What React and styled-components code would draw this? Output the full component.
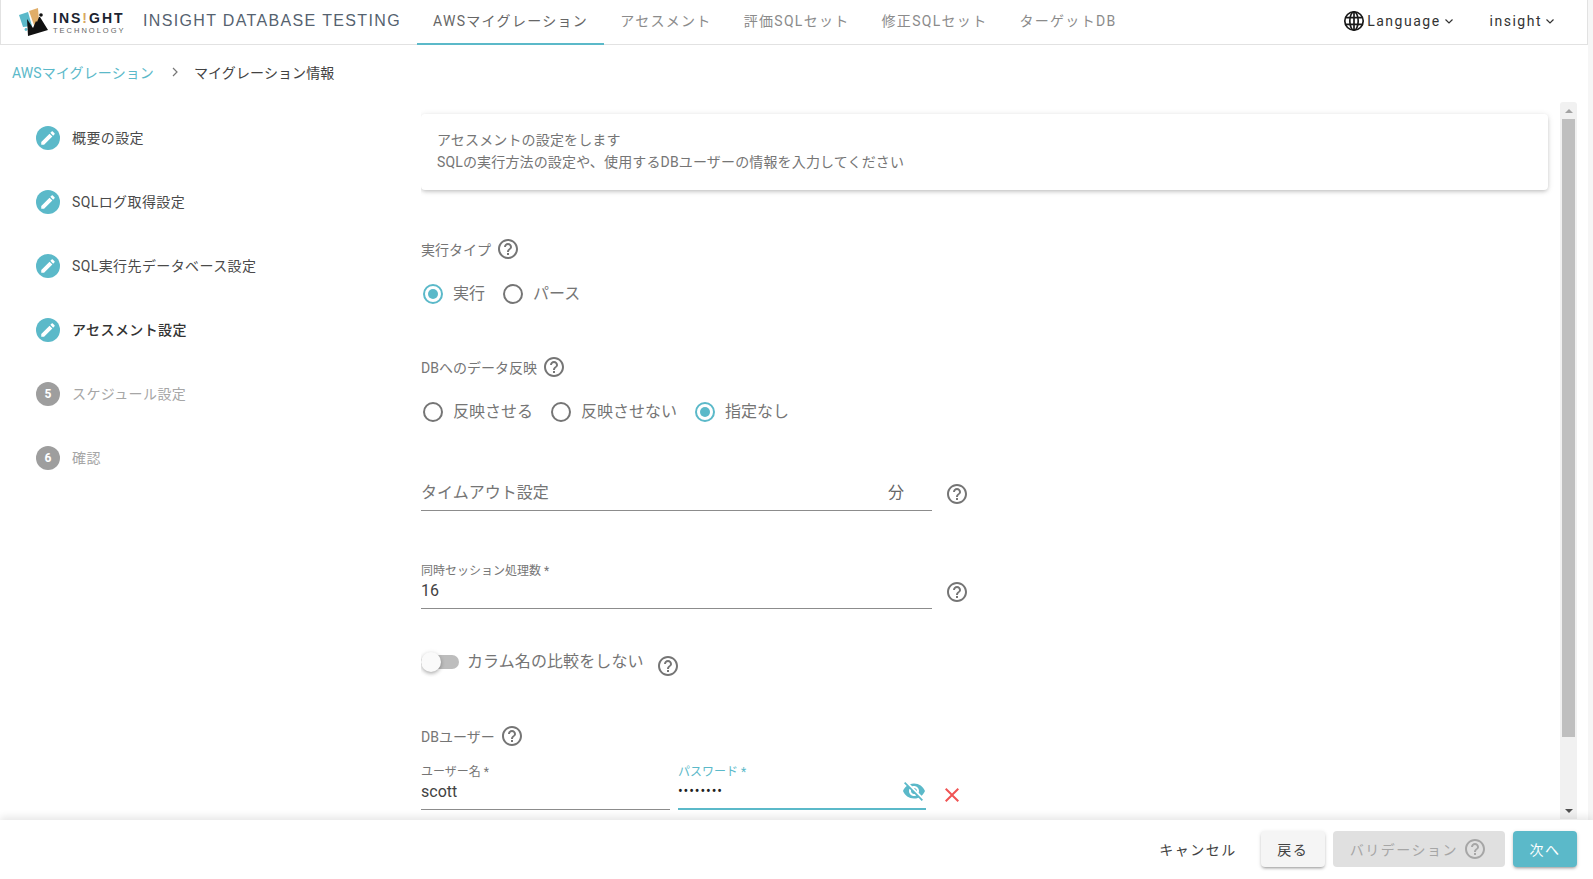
import React from 'react';
import styled, { createGlobalStyle } from 'styled-components';

const teal = '#5bb9c9';
const sans = `Roboto, "Noto Sans CJK JP", sans-serif`;

const GlobalStyle = createGlobalStyle`
  html, body {
    margin: 0;
    height: 100%;
    background: #fff;
    overflow: hidden;
  }
  #root {
    height: 100%;
  }
  * {
    box-sizing: border-box;
  }
`;

const Page = styled.div`
  height: 879px;
  display: flex;
  flex-direction: column;
  font-family: ${sans};
  color: #212121;
  padding-right: 5px;
  background: #f6f6f6;
`;

const NavBar = styled.header`
  height: 45px;
  flex: none;
  display: flex;
  align-items: stretch;
  background: #fff;
  border-bottom: 1px solid #e2e2e2;
  border-left: 1px solid #e2e2e2;
  border-right: 1px solid #e2e2e2;
`;

const LogoBox = styled.div`
  width: 125px;
  margin-left: 17px;
  display: flex;
  align-items: center;
  gap: 3px;
`;

const LogoWords = styled.div`
  display: flex;
  flex-direction: column;
  align-items: flex-start;
  gap: 2px;
  font-family: "Liberation Sans", sans-serif;
  line-height: 1;
  padding-top: 2px;
`;

const LogoName = styled.span`
  font-size: 14px;
  letter-spacing: 2px;
  font-weight: 700;
  color: #1c2430;
  b {
    color: #d9a860;
  }
`;

const LogoSub = styled.span`
  font-size: 7.5px;
  letter-spacing: 2px;
  color: #666;
`;

const Product = styled.div`
  width: 274px;
  align-self: center;
  margin-bottom: 2px;
  font-family: "Liberation Sans", sans-serif;
  font-size: 16px;
  letter-spacing: 1.35px;
  color: #55626f;
  white-space: nowrap;
`;

const Tabs = styled.nav`
  display: flex;
  align-items: stretch;
`;

const Tab = styled.a`
  display: flex;
  align-items: center;
  padding: 0 16px 3px;
  font-size: 14px;
  letter-spacing: 1.3px;
  color: ${(p) => (p.$active ? '#666' : '#8b8b8b')};
  border-bottom: 2px solid ${(p) => (p.$active ? teal : 'transparent')};
  margin-bottom: -1px;
`;

const NavRight = styled.div`
  margin-left: auto;
  display: flex;
  align-items: center;
  padding: 0 29px 3px 0;
`;

const NavMenu = styled.div`
  display: flex;
  align-items: center;
  font-size: 14px;
  letter-spacing: 1.5px;
  color: #333;
  margin-left: ${(p) => p.$gap || 0}px;
  svg {
    flex: none;
  }
`;

const GlobeIcon = styled.svg`
  width: 22px;
  height: 22px;
  fill: none;
  stroke: #1a1a1a;
  stroke-width: 1.7;
  margin-right: 2px;
`;

const ChevronIcon = styled.svg`
  width: 16px;
  height: 16px;
  fill: none;
  stroke: #333;
  stroke-width: 1.2;
`;

const Breadcrumb = styled.div`
  height: 57px;
  flex: none;
  display: flex;
  align-items: center;
  padding: 0 0 4px 12px;
  font-size: 14px;
  letter-spacing: 0.1px;
  color: #424242;
  background: #fff;
`;

const CrumbLink = styled.a`
  color: ${teal};
`;

const CrumbSep = styled.svg`
  width: 6px;
  height: 10px;
  margin: 0 16px 0 18px;
  fill: none;
  stroke: #777;
  stroke-width: 1.2;
`;

const Body = styled.div`
  flex: 1;
  min-height: 0;
  display: flex;
  background: #fff;
`;

const Steps = styled.aside`
  width: 421px;
  flex: none;
  padding: 24px 0 0 36px;
  display: flex;
  flex-direction: column;
  gap: 40px;
`;

const Step = styled.div`
  display: flex;
  align-items: center;
  height: 24px;
  gap: 12px;
  font-size: 14px;
  letter-spacing: 0.4px;
  color: ${(p) => (p.$muted ? '#a6a6a6' : p.$current ? '#333' : '#4a4a4a')};
  font-weight: ${(p) => (p.$current ? 500 : 400)};
`;

const StepLabel = styled.span`
  margin-top: -2px;
`;

const StepDot = styled.span`
  width: 24px;
  height: 24px;
  border-radius: 50%;
  flex: none;
  display: flex;
  align-items: center;
  justify-content: center;
  background: ${(p) => (p.$muted ? '#9e9e9e' : teal)};
  color: #fff;
  font-size: 12px;
  font-weight: 700;
  letter-spacing: 0;
`;

const PencilIcon = styled.svg`
  width: 18px;
  height: 18px;
  fill: #fff;
`;

const Main = styled.main`
  flex: 1;
  min-width: 0;
  overflow: hidden;
  padding: 12px 12px 0 0;
`;

const InfoCard = styled.div`
  height: 76px;
  padding: 16px 16px;
  background: #fff;
  border-radius: 4px;
  box-shadow: 0 2px 4px -1px rgba(0, 0, 0, 0.2), 0 1px 6px rgba(0, 0, 0, 0.12);
  font-size: 14px;
  letter-spacing: 0.15px;
  line-height: 21.5px;
  color: #757575;
`;

const FieldLabel = styled.div`
  display: flex;
  align-items: center;
  gap: 5px;
  font-size: 14px;
  color: #757575;
  height: 24px;
  margin-top: ${(p) => p.$top}px;
`;

const HelpIcon = styled.svg`
  width: 24px;
  height: 24px;
  fill: #757575;
  flex: none;
`;

const RadioRow = styled.div`
  display: flex;
  align-items: center;
  height: 24px;
  margin-top: 19px;
  margin-left: 2px;
`;

const RadioItem = styled.label`
  display: flex;
  align-items: center;
  gap: 10px;
  font-size: 16px;
  color: #757575;
  margin-right: 18px;
`;

const RadioMark = styled.span`
  width: 20px;
  height: 20px;
  margin-top: 4px;
  border-radius: 50%;
  display: flex;
  align-items: center;
  justify-content: center;
  border: 2px solid ${(p) => (p.$on ? teal : '#757575')};
  &::after {
    content: '';
    width: 10px;
    height: 10px;
    border-radius: 50%;
    background: ${(p) => (p.$on ? teal : 'transparent')};
  }
`;

const FieldRow = styled.div`
  display: flex;
  align-items: flex-end;
  width: 548px;
  margin-top: ${(p) => p.$top}px;
  gap: 13px;
`;

const Input = styled.div`
  position: relative;
  flex: ${(p) => (p.$width ? 'none' : 1)};
  width: ${(p) => (p.$width ? `${p.$width}px` : 'auto')};
  min-width: 0;
  height: 48px;
  padding: 16px 0 4px;
  border-bottom: ${(p) => (p.$focus ? `2px solid ${teal}` : '1px solid #8c8c8c')};
  display: flex;
  align-items: center;
  font-size: 16px;
  color: #424242;
`;

const FloatLabel = styled.span`
  position: absolute;
  top: 3px;
  left: 0;
  font-size: 12px;
  line-height: 14px;
  color: ${(p) => (p.$focus ? teal : '#757575')};
`;

const Placeholder = styled.span`
  color: #757575;
  margin-top: -3px;
`;

const Suffix = styled.span`
  margin-left: auto;
  margin-top: -3px;
  margin-right: 28px;
  color: #666;
`;

const FieldHelp = styled(HelpIcon)`
  margin-bottom: 5px;
`;

const SwitchRow = styled.div`
  display: flex;
  align-items: center;
  margin-top: 38px;
  height: 30px;
`;

const SwitchBox = styled.span`
  position: relative;
  width: 38px;
  height: 14px;
  margin-right: 8px;
  border-radius: 7px;
  background: #bdbdbd;
  flex: none;
  &::after {
    content: '';
    position: absolute;
    left: 0;
    top: -3px;
    width: 20px;
    height: 20px;
    border-radius: 50%;
    background: #fafafa;
    box-shadow: 0 2px 4px -1px rgba(0, 0, 0, 0.3), 0 1px 5px rgba(0, 0, 0, 0.15);
  }
`;

const SwitchText = styled.span`
  font-size: 16px;
  letter-spacing: 0.1px;
  color: #757575;
  margin-right: 12px;
  margin-bottom: 4px;
`;

const SwitchHelp = styled(HelpIcon)`
  margin-top: 7px;
`;

const CredRow = styled.div`
  display: flex;
  align-items: flex-end;
  margin-top: 14px;
  gap: 8px;
`;

const PasswordValue = styled.span`
  flex: 1;
  font-size: 14px;
  letter-spacing: 0.9px;
  color: #212121;
`;

const EyeIcon = styled.svg`
  width: 24px;
  height: 24px;
  fill: ${teal};
`;

const RemoveIcon = styled.svg`
  width: 24px;
  height: 24px;
  fill: #f05454;
  margin: 0 0 3px 6px;
`;

const ScrollTrack = styled.div`
  width: 17px;
  flex: none;
  display: flex;
  flex-direction: column;
  align-items: center;
  background: #f1f1f1;
  border-radius: 3px 3px 0 0;
  height: 717px;
  margin-right: 11px;
`;

const ScrollArrow = styled.span`
  flex: none;
  width: 13px;
  height: 17px;
  display: flex;
  align-items: center;
  justify-content: center;
  ${(p) => p.$down && 'margin-top: auto;'}
  &::after {
    content: '';
    border-left: 4px solid transparent;
    border-right: 4px solid transparent;
    ${(p) => (p.$down ? 'border-top: 4px solid #505050;' : 'border-bottom: 4px solid #a3a3a3;')}
  }
`;

const ScrollThumb = styled.span`
  width: 13px;
  height: 618px;
  background: #bfbfbf;
  flex: none;
`;

const Footer = styled.footer`
  height: 59px;
  flex: none;
  position: relative;
  margin-right: -5px;
  background: #fff;
  display: flex;
  align-items: center;
  justify-content: flex-end;
  gap: 8px;
  padding: 0 16px 2px 0;
  box-shadow: 0 -3px 8px rgba(0, 0, 0, 0.1);
`;

const TextButton = styled.button`
  height: 36px;
  padding: 0 16px;
  border: 0;
  background: none;
  font: 14px ${sans};
  color: #424242;
  letter-spacing: 1.5px;
`;

const Button = styled.button`
  height: 36px;
  min-width: 64px;
  padding: ${(p) => (p.$disabled ? '0 18px 0 17px' : '0 16px')};
  border: 0;
  border-radius: 4px;
  font: 14px ${sans};
  letter-spacing: 1.5px;
  display: flex;
  align-items: center;
  justify-content: center;
  gap: 5px;
  background: ${(p) => (p.$primary ? teal : p.$disabled ? '#e0e0e0' : '#f5f5f5')};
  color: ${(p) => (p.$primary ? '#fff' : p.$disabled ? '#a6a6a6' : '#424242')};
  box-shadow: ${(p) => (p.$disabled ? 'none' : '0 2px 3px -1px rgba(0,0,0,.35), 0 1px 4px rgba(0,0,0,.12)')};
`;

const ButtonHelp = styled(HelpIcon)`
  fill: #a6a6a6;
`;

const helpPath = 'M11 18h2v-2h-2v2zm1-16C6.48 2 2 6.48 2 12s4.48 10 10 10 10-4.48 10-10S17.52 2 12 2zm0 18c-4.41 0-8-3.59-8-8s3.59-8 8-8 8 3.59 8 8-3.59 8-8 8zm0-14c-2.21 0-4 1.79-4 4h2c0-1.1.9-2 2-2s2 .9 2 2c0 2-3 1.75-3 5h2c0-2.25 3-2.5 3-5 0-2.21-1.79-4-4-4z';
const pencilPath = 'M3 17.25V21h3.75L17.81 9.94l-3.75-3.75L3 17.25zM20.71 7.04c.39-.39.39-1.02 0-1.41l-2.34-2.34c-.39-.39-1.02-.39-1.41 0l-1.83 1.83 3.75 3.75 1.83-1.83z';
const eyeOffPath = 'M12 7c2.76 0 5 2.24 5 5 0 .65-.13 1.26-.36 1.83l2.92 2.92c1.51-1.26 2.7-2.89 3.43-4.75-1.73-4.39-6-7.5-11-7.5-1.4 0-2.74.25-3.98.7l2.16 2.16C10.74 7.13 11.35 7 12 7zM2 4.27l2.28 2.28.46.46C3.08 8.3 1.78 10.02 1 12c1.73 4.39 6 7.5 11 7.5 1.55 0 3.03-.3 4.38-.84l.42.42L19.73 22 21 20.73 3.27 3 2 4.27zM7.53 9.8l1.55 1.55c-.05.21-.08.43-.08.65 0 1.66 1.34 3 3 3 .22 0 .44-.03.65-.08l1.55 1.55c-.67.33-1.41.53-2.2.53-2.76 0-5-2.24-5-5 0-.79.2-1.53.53-2.2zm4.31-.78l3.15 3.15.02-.16c0-1.66-1.34-3-3-3l-.17.01z';
const closePath = 'M19 6.41L17.59 5 12 10.59 6.41 5 5 6.41 10.59 12 5 17.59 6.41 19 12 13.41 17.59 19 19 17.59 13.41 12z';

const Help = () => (
  <HelpIcon viewBox="0 0 24 24">
    <path d={helpPath} />
  </HelpIcon>
);

const Chevron = () => (
  <ChevronIcon viewBox="0 0 16 16">
    <path d="M4.5 6.5 8 10l3.5-3.5" />
  </ChevronIcon>
);

const Globe = () => (
  <GlobeIcon viewBox="0 0 22 22">
    <circle cx="11" cy="11" r="9.2" />
    <ellipse cx="11" cy="11" rx="4.2" ry="9.2" />
    <path d="M2.4 7.7h17.2M2.4 14.3h17.2M11 1.8v18.4" />
  </GlobeIcon>
);

const LogoMark = () => (
  <svg width="32" height="30" viewBox="0 0 32 30">
    <path d="M1 8 10 5l4 14-9 1z" fill="#5bb9c9" />
    <circle cx="8" cy="22.5" r="1.4" fill="#5bb9c9" />
    <path d="M11 4l9-3 1 13-4 7z" fill="#e0ad68" />
    <path d="M9 12l6 9 3-7 1 1 2-5 1 0 8 13-20 6z" fill="#111" />
    <circle cx="23" cy="8" r="1.8" fill="#111" />
  </svg>
);

const stepList = [
  { label: '概要の設定' },
  { label: 'SQLログ取得設定' },
  { label: 'SQL実行先データベース設定' },
  { label: 'アセスメント設定', current: true },
  { label: 'スケジュール設定', num: 5 },
  { label: '確認', num: 6 },
];

const tabs = ['AWSマイグレーション', 'アセスメント', '評価SQLセット', '修正SQLセット', 'ターゲットDB'];

export default function App() {
  return (
    <Page>
      <GlobalStyle />
      <NavBar>
        <LogoBox>
          <LogoMark />
          <LogoWords>
            <LogoName>INS<b>!</b>GHT</LogoName>
            <LogoSub>TECHNOLOGY</LogoSub>
          </LogoWords>
        </LogoBox>
        <Product>INSIGHT DATABASE TESTING</Product>
        <Tabs>
          {tabs.map((t, i) => (
            <Tab key={t} $active={i === 0}>{t}</Tab>
          ))}
        </Tabs>
        <NavRight>
          <NavMenu>
            <Globe />
            Language
            <Chevron />
          </NavMenu>
          <NavMenu $gap={33}>
            insight
            <Chevron />
          </NavMenu>
        </NavRight>
      </NavBar>

      <Breadcrumb>
        <CrumbLink>AWSマイグレーション</CrumbLink>
        <CrumbSep viewBox="0 0 6 10"><path d="M1 1l4 4-4 4" /></CrumbSep>
        マイグレーション情報
      </Breadcrumb>

      <Body>
        <Steps>
          {stepList.map((s) => (
            <Step key={s.label} $muted={!!s.num} $current={s.current}>
              <StepDot $muted={!!s.num}>
                {s.num || (
                  <PencilIcon viewBox="0 0 24 24">
                    <path d={pencilPath} />
                  </PencilIcon>
                )}
              </StepDot>
              <StepLabel>{s.label}</StepLabel>
            </Step>
          ))}
        </Steps>

        <Main>
          <InfoCard>
            アセスメントの設定をします
            <br />
            SQLの実行方法の設定や、使用するDBユーザーの情報を入力してください
          </InfoCard>

          <FieldLabel $top={47}>実行タイプ<Help /></FieldLabel>
          <RadioRow>
            <RadioItem><RadioMark $on />実行</RadioItem>
            <RadioItem><RadioMark />パース</RadioItem>
          </RadioRow>

          <FieldLabel $top={51}>DBへのデータ反映<Help /></FieldLabel>
          <RadioRow>
            <RadioItem><RadioMark />反映させる</RadioItem>
            <RadioItem><RadioMark />反映させない</RadioItem>
            <RadioItem><RadioMark $on />指定なし</RadioItem>
          </RadioRow>

          <FieldRow $top={41}>
            <Input>
              <Placeholder>タイムアウト設定</Placeholder>
              <Suffix>分</Suffix>
            </Input>
            <FieldHelp viewBox="0 0 24 24"><path d={helpPath} /></FieldHelp>
          </FieldRow>

          <FieldRow $top={50}>
            <Input>
              <FloatLabel>同時セッション処理数 *</FloatLabel>
              16
            </Input>
            <FieldHelp viewBox="0 0 24 24"><path d={helpPath} /></FieldHelp>
          </FieldRow>

          <SwitchRow>
            <SwitchBox />
            <SwitchText>カラム名の比較をしない</SwitchText>
            <SwitchHelp viewBox="0 0 24 24"><path d={helpPath} /></SwitchHelp>
          </SwitchRow>

          <FieldLabel $top={47}>DBユーザー<Help /></FieldLabel>

          <CredRow>
            <Input $width={249}>
              <FloatLabel>ユーザー名 *</FloatLabel>
              scott
            </Input>
            <Input $width={248} $focus>
              <FloatLabel $focus>パスワード *</FloatLabel>
              <PasswordValue>••••••••</PasswordValue>
              <EyeIcon viewBox="0 0 24 24"><path d={eyeOffPath} /></EyeIcon>
            </Input>
            <RemoveIcon viewBox="0 0 24 24"><path d={closePath} /></RemoveIcon>
          </CredRow>
        </Main>

        <ScrollTrack>
          <ScrollArrow />
          <ScrollThumb />
          <ScrollArrow $down />
        </ScrollTrack>
      </Body>

      <Footer>
        <TextButton>キャンセル</TextButton>
        <Button>戻る</Button>
        <Button $disabled>
          バリデーション
          <ButtonHelp viewBox="0 0 24 24"><path d={helpPath} /></ButtonHelp>
        </Button>
        <Button $primary>次へ</Button>
      </Footer>
    </Page>
  );
}
